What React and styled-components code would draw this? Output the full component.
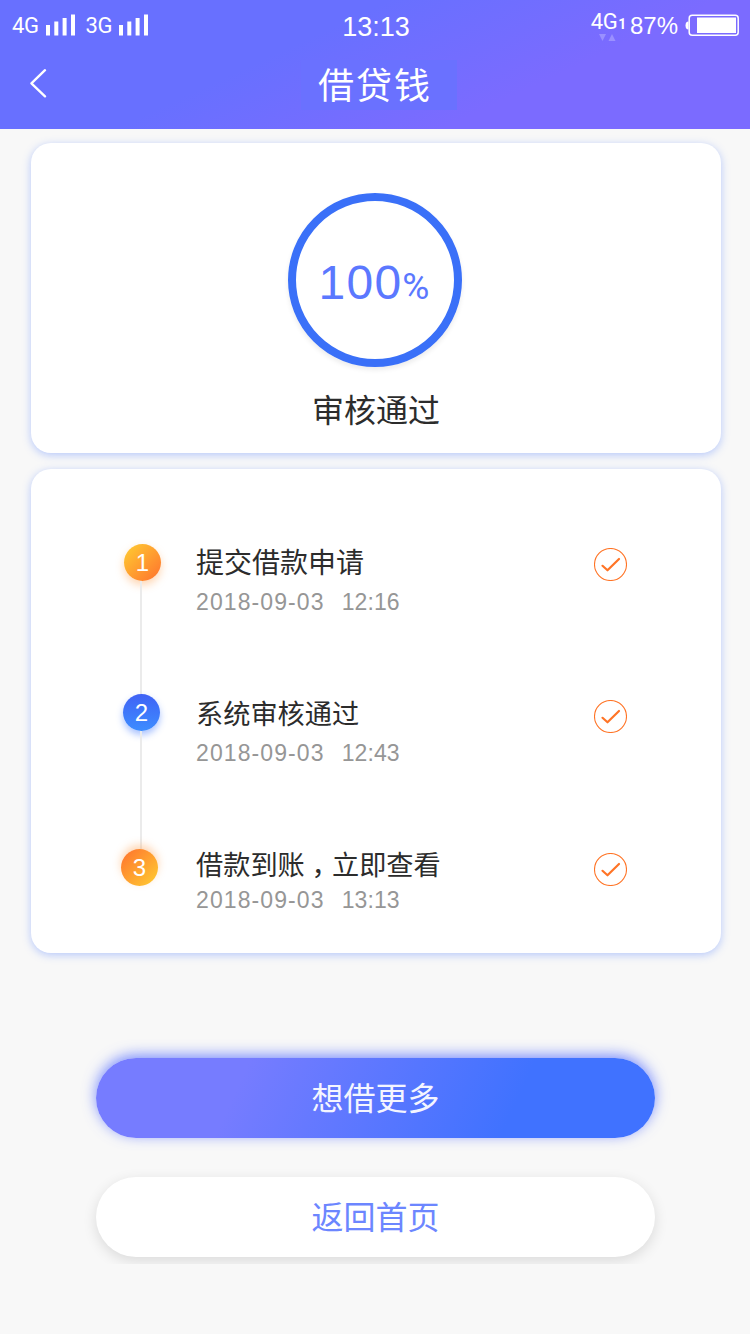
import React from 'react';
// Styles
import styled, { createGlobalStyle } from "styled-components";

// Loan steps
const steps = [
    {
        id: 1,
        title: '提交借款申请',
        size: 28,
        date: '2018-09-03',
        time: '12:16',
        tone: 'linear-gradient(135deg, #ffc531 10%, #ff7a2e 90%)',
        glow: '0 4px 8px rgba(255, 150, 60, 0.4)',
        left: 3.5,
        height: 150,
        top: 1,
        dateTop: 3,
        checkTop: 4,
    },
    {
        id: 2,
        title: '系统审核通过',
        size: 27.2,
        date: '2018-09-03',
        time: '12:43',
        tone: 'linear-gradient(180deg, #4062f5, #3d8dff)',
        glow: '0 4px 7px rgba(64, 120, 255, 0.45)',
        left: 2.5,
        height: 155,
        top: 2,
        dateTop: 3,
        checkTop: 6,
    },
    {
        id: 3,
        title: '借款到账，立即查看',
        size: 27.2,
        date: '2018-09-03',
        time: '13:13',
        tone: 'linear-gradient(135deg, #ff7a2e 10%, #ffc531 90%)',
        glow: '0 -4px 8px rgba(255, 150, 60, 0.4)',
        left: 0.5,
        height: 60,
        top: -2,
        dateTop: -1,
        checkTop: 4,
    },
];

const SignalBars = () => (
    <svg width="30" height="22" viewBox="0 0 30 22" fill="#fff">
        <rect x="0" y="11" width="4" height="10.5" />
        <rect x="8.3" y="7.5" width="4" height="14" />
        <rect x="16.6" y="4" width="4" height="17.5" />
        <rect x="25" y="0.5" width="4" height="21" />
    </svg>
);

const Battery = () => (
    <svg width="55" height="23" viewBox="0 0 55 23">
        <path d="M3.5 7.5 Q0.5 7.5 0.5 11.5 Q0.5 15.5 3.5 15.5 Z" fill="#fff" />
        <rect x="4.2" y="1.2" width="49" height="20" rx="3" fill="none" stroke="#fff" strokeWidth="1.5" />
        <rect x="12" y="3.5" width="39" height="15.5" fill="#fff" />
    </svg>
);

const CheckIcon = () => (
    <svg width="33" height="33" viewBox="0 0 33 33" fill="none" stroke="#ff7426">
        <circle cx="16.5" cy="16.5" r="16" strokeWidth="1.1" />
        <path d="M8.5 17.8 L13.5 22.3 L25 11" strokeWidth="2.2" strokeLinecap="round" strokeLinejoin="round" />
    </svg>
);

// The comma sits in the middle of its cell
const getTitle = (title) => {
    const [before, after] = title.split('，');

    return after ? <>{before}<Comma>，</Comma>{after}</> : before;
};

const App = () => {
    return (
        <>
            <GlobalStyle />
            <Page>
                <Header>
                    <StatusBar>
                        <Signals>
                            <Network>4G</Network>
                            <SignalBars />
                            <Network>3G</Network>
                            <SignalBars />
                        </Signals>
                        <Clock>13:13</Clock>
                        <Power>
                            <DataNetwork>
                                <Network>4G<Sim>1</Sim></Network>
                                <svg width="17" height="7" viewBox="0 0 17 7" fill="#fff" fillOpacity="0.25">
                                    <path d="M0 0 H7 L3.5 7 Z" />
                                    <path d="M9.5 7 H16.5 L13 0 Z" />
                                </svg>
                            </DataNetwork>
                            <Percent>87%</Percent>
                            <Battery />
                        </Power>
                    </StatusBar>
                    <NavBar>
                        <Back aria-label="back">
                            <svg width="18" height="30" viewBox="0 0 18 30" fill="none" stroke="#fff" strokeWidth="2.3" strokeLinecap="round" strokeLinejoin="round">
                                <path d="M15 2.2 L1.4 15.3 L15 28.4" />
                            </svg>
                        </Back>
                        <NavTitle>借贷钱</NavTitle>
                    </NavBar>
                </Header>

                <Result>
                    <Ring>
                        <Score>100<small>%</small></Score>
                    </Ring>
                    <ResultText>审核通过</ResultText>
                </Result>

                <Steps>
                    {
                        steps.map((step, i) => (
                            <Step key={step.id} $height={step.height}>
                                <Rail>
                                    <Dot $tone={step.tone} $glow={step.glow} $left={step.left}>{step.id}</Dot>
                                    {i < steps.length - 1 && <Connector />}
                                </Rail>
                                <StepBody $top={step.top}>
                                    <StepTitle $size={step.size}>{getTitle(step.title)}</StepTitle>
                                    <StepDate $top={step.dateTop}>
                                        <span>{step.date}</span>
                                        <Time>{step.time}</Time>
                                    </StepDate>
                                </StepBody>
                                <Check $top={step.checkTop}><CheckIcon /></Check>
                            </Step>
                        ))
                    }
                </Steps>

                <Actions>
                    <PrimaryButton>想借更多</PrimaryButton>
                    <PlainButton>返回首页</PlainButton>
                </Actions>
            </Page>
        </>
    );
};

// Styles
const GlobalStyle = createGlobalStyle`
  * {
    box-sizing: border-box;
  }

  body {
    margin: 0;
    background: #f8f8f8;
    font-family: "Liberation Sans", "Noto Sans CJK SC", sans-serif;
  }

  svg {
    display: block;
    flex-shrink: 0;
  }
`;

const Page = styled.div`
  width: 750px;
  height: 1334px;
  background: #f8f8f8;
  overflow: hidden;
`;

const Header = styled.header`
  height: 129px;
  color: white;
  background: linear-gradient(155deg, #6870ff 38%, #7b6bff 70%);
`;

const StatusBar = styled.div`
  height: 50px;
  padding: 0 10px 0 12px;
  display: grid;
  grid-template-columns: 1fr auto 1fr;
  align-items: center;
`;

const Signals = styled.div`
  display: flex;
  align-items: center;

  svg {
    margin: 0 10px 0 7px;
  }

  span {
    padding-top: 1px;
  }
`;

const Network = styled.span`
  font-family: Roboto, sans-serif;
  font-size: 22px;
  line-height: 24px;
  letter-spacing: -0.4px;
`;

const Clock = styled.span`
  font-size: 27px;
  line-height: 30px;
  padding-top: 3px;
`;

const Power = styled.div`
  display: flex;
  align-items: center;
  justify-content: flex-end;
`;

const DataNetwork = styled.div`
  height: 30px;
  display: flex;
  flex-direction: column;

  svg {
    margin: -2px 0 0 8px;
  }
`;

const Sim = styled.b`
  margin-left: 1px;
  font-size: 14px;
`;

const Percent = styled.span`
  margin: 2px 7px 0 4px;
  font-size: 24px;
  line-height: 28px;
`;

const NavBar = styled.div`
  height: 79px;
  padding: 10px 0 0 30px;
  display: grid;
  grid-template-columns: 271px 156px;
  align-items: start;
`;

const Back = styled.button`
  padding: 8px 0 0;
  border: 0;
  background: none;
`;

const NavTitle = styled.h1`
  height: 50px;
  margin: 0;
  padding-left: 17px;
  background: #6a71ff;
  font-size: 36px;
  font-weight: 400;
  line-height: 53px;
  letter-spacing: 2px;
`;

const Card = styled.section`
  width: 690px;
  margin-left: 30.5px;
  border-radius: 20px;
  background: white;
  box-shadow: 0 2px 9px rgba(64, 114, 255, 0.36);
`;

const Result = styled(Card)`
  height: 310px;
  margin-top: 14px;
  padding: 50px 1px 0 0;
  display: flex;
  flex-direction: column;
  align-items: center;
`;

const Ring = styled.div`
  width: 174px;
  height: 174px;
  border: 8px solid #3a70f8;
  border-radius: 50%;
  display: flex;
  align-items: center;
  justify-content: center;
  box-shadow: 0 3px 5px rgba(0, 0, 0, 0.08);
`;

const Score = styled.div`
  padding: 9px 2px 0 0;
  color: #5b78ff;
  font-size: 48px;
  line-height: 56px;
  letter-spacing: 1.2px;

  small {
    font-family: Roboto, sans-serif;
    font-size: 37px;
    letter-spacing: 0;
  }
`;

const ResultText = styled.div`
  margin-top: 21px;
  padding-left: 2px;
  color: #2c2c2c;
  font-size: 32px;
  line-height: 46px;
`;

const Steps = styled(Card)`
  height: 484px;
  margin-top: 16px;
  padding: 75px 94px 0 90px;
`;

const Step = styled.div`
  height: ${({ $height }) => $height}px;
  display: flex;
  align-items: flex-start;
`;

const Rail = styled.div`
  width: 75.5px;
  height: 100%;
  display: flex;
  flex-direction: column;
`;

const Dot = styled.div`
  width: 37px;
  height: 37px;
  flex-shrink: 0;
  margin-left: ${({ $left }) => $left}px;
  border-radius: 50%;
  background: ${({ $tone }) => $tone};
  box-shadow: ${({ $glow }) => $glow};
  color: white;
  font-family: "Liberation Sans", sans-serif;
  font-size: 24px;
  line-height: 37px;
  text-align: center;
`;

const Connector = styled.div`
  width: 2px;
  flex: 1;
  margin-left: 19.5px;
  background: #ebebeb;
`;

const StepBody = styled.div`
  flex: 1;
  margin-top: ${({ $top }) => $top}px;
`;

const StepTitle = styled.div`
  height: 38px;
  color: #2c2c2c;
  font-size: ${({ $size }) => $size}px;
  line-height: 38px;
  white-space: nowrap;
`;

const Comma = styled.span`
  margin: 0 0.25em;
  font-feature-settings: "halt";
`;

const StepDate = styled.div`
  margin-top: ${({ $top }) => $top}px;
  display: flex;
  gap: 17px;
  color: #969696;
  font-size: 23px;
  line-height: 32px;
  letter-spacing: 1.1px;
`;

const Time = styled.span`
  letter-spacing: 0.1px;
`;

const Check = styled.div`
  margin-top: ${({ $top }) => $top}px;
`;

const Actions = styled.div`
  margin: 105px 95px 0 96px;
  display: flex;
  flex-direction: column;
  gap: 39px;
`;

const Button = styled.button`
  height: 80px;
  padding: 2px 0 0;
  border: 0;
  border-radius: 40px;
  font-family: inherit;
  font-size: 32px;
  line-height: 78px;
`;

const PrimaryButton = styled(Button)`
  color: #f4f5ff;
  background: linear-gradient(115deg, #767cff 26%, #4072ff 74%);
  box-shadow: 0 -3px 14px rgba(80, 105, 255, 0.75);
`;

const PlainButton = styled(Button)`
  color: #6c86ff;
  background: white;
  box-shadow: 0 4px 14px rgba(0, 0, 0, 0.12);
  clip-path: inset(-20px -20px -7px);
`;

export default App;
